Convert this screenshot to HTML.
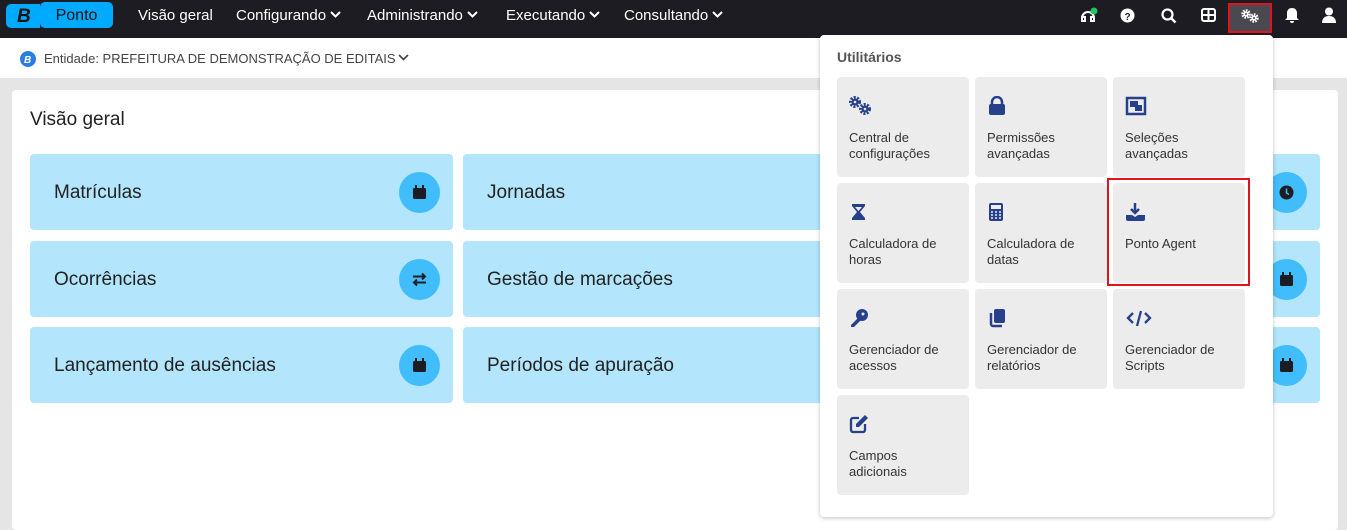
<!DOCTYPE html>
<html><head><meta charset="utf-8"><style>
*{box-sizing:border-box;margin:0;padding:0}
body{width:1347px;height:530px;overflow:hidden;background:#e5e5e5;font-family:"Liberation Sans",sans-serif;position:relative}
.nav{position:absolute;left:0;top:0;width:1347px;height:38px;background:#1e1c23;color:#fff}
.nav .it{position:absolute;top:7px;font-size:15px}
.nav .it svg{margin-left:4px;vertical-align:2px}
.badge{position:absolute;left:40px;top:2px;width:73px;height:26px;background:#00aaff;border-radius:5px;color:#111;font-size:16px;text-align:center;line-height:28px}
.logo{position:absolute;left:6px;top:4px;font-weight:bold;font-style:italic;font-size:19px;color:#111;background:#00aaff;width:34px;height:24px;border-radius:5px 0 0 5px;padding-left:11px;line-height:25px}
.sub{position:absolute;left:0;top:38px;width:1347px;height:40px;background:#fff}
.panel{position:absolute;left:12px;top:90px;width:1326px;height:440px;background:#fff;border-radius:4px}
.card{position:absolute;height:76px;background:#b3e5fc;border-radius:4px;font-size:19px;color:#222;padding-left:24px;line-height:78px}
.circ{position:absolute;right:13px;top:18px;width:41px;height:41px;border-radius:50%;background:#40bdfa}
.circ svg{position:absolute;left:13px;top:13px}
.dd{position:absolute;left:820px;top:35px;width:453px;height:482px;background:#fff;border-radius:4px;box-shadow:0 1px 4px rgba(0,0,0,.25)}
.tile{position:absolute;width:132px;height:100px;background:#ececec;border-radius:4px;font-size:13px;color:#333;line-height:16px}
.tile .t{position:absolute;left:12px;top:53px}
.tile svg{position:absolute;left:12px;top:19px}
</style></head><body>
<div class="nav">
<div class="logo">B</div><div class="badge">Ponto</div>
<div class="it" style="left:138px">Visão geral</div>
<div class="it" style="left:236px">Configurando<svg width="11" height="7"><path d="M1 1l4.5 4.5L10 1" stroke="#fff" stroke-width="2" fill="none"/></svg></div>
<div class="it" style="left:367px">Administrando<svg width="11" height="7"><path d="M1 1l4.5 4.5L10 1" stroke="#fff" stroke-width="2" fill="none"/></svg></div>
<div class="it" style="left:506px">Executando<svg width="11" height="7"><path d="M1 1l4.5 4.5L10 1" stroke="#fff" stroke-width="2" fill="none"/></svg></div>
<div class="it" style="left:624px">Consultando<svg width="11" height="7"><path d="M1 1l4.5 4.5L10 1" stroke="#fff" stroke-width="2" fill="none"/></svg></div>
<svg style="position:absolute;left:1079px;top:7px" width="20" height="18"><path d="M3 11a6 6 0 0 1 12 0v3h-3v-4h3M3 14v-4h3v4z" stroke="#fff" stroke-width="2" fill="none"/><circle cx="15" cy="4" r="3.5" fill="#22c55e"/></svg>
<svg style="position:absolute;left:1120px;top:8px" width="15" height="15"><circle cx="7.5" cy="7.5" r="7" fill="#fff"/><text x="4.5" y="12" font-size="10" font-weight="bold" fill="#1e1c23" font-family="Liberation Sans">?</text></svg>
<svg style="position:absolute;left:1161px;top:8px" width="16" height="16"><circle cx="6.5" cy="6.5" r="5" stroke="#fff" stroke-width="2.2" fill="none"/><path d="M10 10l4.5 4.5" stroke="#fff" stroke-width="2.5"/></svg>
<svg style="position:absolute;left:1201px;top:8px" width="15" height="14"><rect x="1" y="1" width="13" height="12" rx="2" stroke="#fff" stroke-width="2" fill="none"/><path d="M1 7h13M7.5 1v12" stroke="#fff" stroke-width="2"/></svg>
<div style="position:absolute;left:1228px;top:3px;width:44px;height:30px;background:#4a4850;border:2px solid #e0141e"></div>
<svg style="position:absolute;left:1241px;top:9px" width="20" height="14"><circle cx="5" cy="5" r="3.5" fill="none" stroke="#fff" stroke-width="2.5" stroke-dasharray="1.6 1.1"/><circle cx="5" cy="5" r="2.6" fill="#fff"/><circle cx="13" cy="9" r="3.5" fill="none" stroke="#fff" stroke-width="2.5" stroke-dasharray="1.6 1.1"/><circle cx="13" cy="9" r="2.6" fill="#fff"/><circle cx="5" cy="5" r="1" fill="#4a4850"/><circle cx="13" cy="9" r="1" fill="#4a4850"/></svg>
<svg style="position:absolute;left:1285px;top:7px" width="14" height="17"><path d="M7 1c3 0 5 2 5 5v5l2 2H0l2-2V6c0-3 2-5 5-5zM5 14h4a2 2 0 0 1-4 0z" fill="#fff"/></svg>
<svg style="position:absolute;left:1322px;top:7px" width="14" height="16"><circle cx="7" cy="4.5" r="4" fill="#fff"/><path d="M0 16c0-5 3-7 7-7s7 2 7 7z" fill="#fff"/></svg>
</div>
<div class="sub">
<svg style="position:absolute;left:20px;top:13px" width="16" height="16"><circle cx="8" cy="8" r="8" fill="#2b7de0"/><text x="4" y="12" font-size="10" font-style="italic" font-weight="bold" fill="#fff" font-family="Liberation Sans">B</text></svg>
<div style="position:absolute;left:44px;top:13px;font-size:13px;color:#444">Entidade: PREFEITURA DE DEMONSTRAÇÃO DE EDITAIS<svg width="11" height="7" style="margin-left:2px;vertical-align:2px"><path d="M1 1l4.5 4.5L10 1" stroke="#444" stroke-width="1.6" fill="none"/></svg></div>
</div>
<div class="panel"><div style="position:absolute;left:18px;top:19px;font-size:19px;color:#222">Visão geral</div></div>
<div class="card" style="left:30px;top:154px;width:423px">Matrículas<div class="circ"><svg width="15" height="15"><rect x="1" y="3" width="13" height="11" rx="1.5" fill="#1e1c23"/><rect x="3" y="0" width="2" height="4" fill="#1e1c23"/><rect x="10" y="0" width="2" height="4" fill="#1e1c23"/></svg></div></div>
<div class="card" style="left:463px;top:154px;width:423px">Jornadas</div>
<div class="card" style="left:896px;top:154px;width:424px"><div class="circ"><svg width="15" height="15"><circle cx="7.5" cy="7.5" r="7" fill="#1e1c23"/><path d="M7.5 3.5v4.5l2.5 1.5" stroke="#40bdfa" stroke-width="1.5" fill="none"/></svg></div></div>
<div class="card" style="left:30px;top:241px;width:423px">Ocorrências<div class="circ"><svg width="15" height="15"><path d="M1 4.5h12M10 1.5l3 3-3 3M14 10.5H2M5 7.5l-3 3 3 3" stroke="#1e1c23" stroke-width="2" fill="none"/></svg></div></div>
<div class="card" style="left:463px;top:241px;width:423px">Gestão de marcações</div>
<div class="card" style="left:896px;top:241px;width:424px"><div class="circ"><svg width="15" height="15"><rect x="1" y="3" width="13" height="11" rx="1.5" fill="#1e1c23"/><rect x="3" y="0" width="2" height="4" fill="#1e1c23"/><rect x="10" y="0" width="2" height="4" fill="#1e1c23"/></svg></div></div>
<div class="card" style="left:30px;top:327px;width:423px">Lançamento de ausências<div class="circ"><svg width="15" height="15"><rect x="1" y="3" width="13" height="11" rx="1.5" fill="#1e1c23"/><rect x="3" y="0" width="2" height="4" fill="#1e1c23"/><rect x="10" y="0" width="2" height="4" fill="#1e1c23"/></svg></div></div>
<div class="card" style="left:463px;top:327px;width:423px">Períodos de apuração</div>
<div class="card" style="left:896px;top:327px;width:424px"><div class="circ"><svg width="15" height="15"><rect x="1" y="3" width="13" height="11" rx="1.5" fill="#1e1c23"/><rect x="3" y="0" width="2" height="4" fill="#1e1c23"/><rect x="10" y="0" width="2" height="4" fill="#1e1c23"/></svg></div></div>
<div class="dd">
<div style="position:absolute;left:17px;top:14px;font-size:14px;font-weight:bold;color:#555">Utilitários</div>
<div class="tile" style="left:17px;top:42px"><svg width="26" height="20"><circle cx="6" cy="6" r="4.5" fill="none" stroke="#27408b" stroke-width="3" stroke-dasharray="2 1.3"/><circle cx="6" cy="6" r="3.5" fill="#27408b"/><circle cx="16" cy="13" r="4.5" fill="none" stroke="#27408b" stroke-width="3" stroke-dasharray="2 1.3"/><circle cx="16" cy="13" r="3.5" fill="#27408b"/><circle cx="6" cy="6" r="1.3" fill="#ececec"/><circle cx="16" cy="13" r="1.3" fill="#ececec"/></svg><div class="t">Central de<br>configurações</div></div>
<div class="tile" style="left:155px;top:42px"><svg width="20" height="20"><path d="M5 9V6a5 5 0 0 1 10 0v3" stroke="#27408b" stroke-width="2.5" fill="none"/><rect x="2" y="8" width="16" height="11" rx="2" fill="#27408b"/></svg><div class="t">Permissões<br>avançadas</div></div>
<div class="tile" style="left:293px;top:42px"><svg width="22" height="20"><rect x="2" y="2" width="18" height="16" stroke="#27408b" stroke-width="2.5" fill="none"/><rect x="5" y="5" width="8" height="6" fill="#27408b"/><rect x="10" y="9" width="7" height="6" fill="#27408b"/></svg><div class="t">Seleções<br>avançadas</div></div>
<div class="tile" style="left:17px;top:148px"><svg width="20" height="20"><path d="M3 2h13v2l-5 6 5 6v2H3v-2l5-6-5-6z" fill="#27408b"/><path d="M6 5h7l-3.5 4z" fill="#ececec"/></svg><div class="t">Calculadora de<br>horas</div></div>
<div class="tile" style="left:155px;top:148px"><svg width="20" height="20"><rect x="2" y="1" width="14" height="18" rx="2" fill="#27408b"/><rect x="4" y="3" width="10" height="4" fill="#ececec"/><path d="M4 10h2M8 10h2M12 10h2M4 13h2M8 13h2M12 13h2M4 16h2M8 16h2M12 16h2" stroke="#ececec" stroke-width="1.5"/></svg><div class="t">Calculadora de<br>datas</div></div>
<div class="tile" style="left:293px;top:148px"><svg width="22" height="20"><path d="M10 1v9M6 7l4 4 4-4" stroke="#27408b" stroke-width="2.5" fill="none"/><path d="M1 13h6l3 2 3-2h7v4a2 2 0 0 1-2 2H3a2 2 0 0 1-2-2z" fill="#27408b"/></svg><div class="t">Ponto Agent</div></div>
<div style="position:absolute;left:287px;top:143px;width:143px;height:108px;border:2px solid #e0141e"></div>
<div class="tile" style="left:17px;top:254px"><svg width="20" height="20"><circle cx="13" cy="7" r="6" fill="#27408b"/><path d="M9 10l-7 7v2h3l7-7z" fill="#27408b"/><circle cx="14" cy="6" r="1.5" fill="#ececec"/></svg><div class="t">Gerenciador de<br>acessos</div></div>
<div class="tile" style="left:155px;top:254px"><svg width="20" height="20"><rect x="7" y="1" width="11" height="14" rx="2" fill="#27408b"/><path d="M4 5v11a2 2 0 0 0 2 2h9" stroke="#27408b" stroke-width="2.5" fill="none"/></svg><div class="t">Gerenciador de<br>relatórios</div></div>
<div class="tile" style="left:293px;top:254px"><svg width="28" height="20"><path d="M8 5l-5 5 5 5M20 5l5 5-5 5M16 3l-4 15" stroke="#27408b" stroke-width="2.3" fill="none"/></svg><div class="t">Gerenciador de<br>Scripts</div></div>
<div class="tile" style="left:17px;top:360px"><svg width="20" height="20"><path d="M10 4H4a2 2 0 0 0-2 2v10a2 2 0 0 0 2 2h10a2 2 0 0 0 2-2v-6" stroke="#27408b" stroke-width="2.3" fill="none"/><path d="M16 1l3 3-9 9H7v-3z" fill="#27408b"/></svg><div class="t">Campos<br>adicionais</div></div>
</div>
</body></html>
